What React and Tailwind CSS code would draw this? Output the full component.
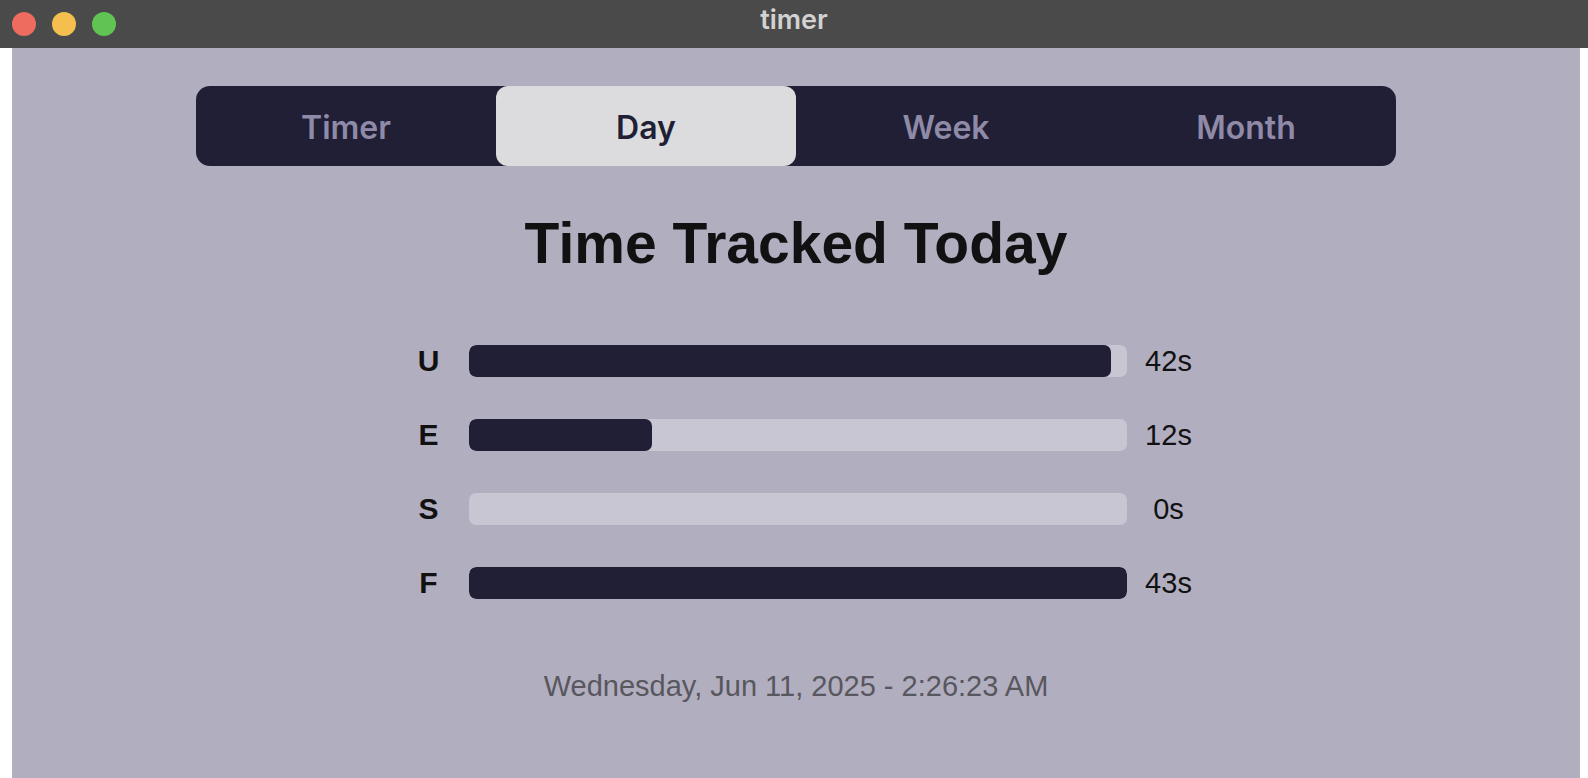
import { useMemo } from "react";

const TABS = ["Timer", "Day", "Week", "Month"];

const ENTRIES = [
  { label: "U", seconds: 42 },
  { label: "E", seconds: 12 },
  { label: "S", seconds: 0 },
  { label: "F", seconds: 43 },
];

function TitleBar() {
  return (
    <div className="relative flex h-12 items-center bg-[#4a4a4a]">
      <div className="flex gap-4 pl-3">
        <span className="h-6 w-6 rounded-full bg-[#ee6b60]" />
        <span className="h-6 w-6 rounded-full bg-[#f5bf4f]" />
        <span className="h-6 w-6 rounded-full bg-[#5fc454]" />
      </div>
      <div className="absolute inset-x-0 top-0 flex h-10 items-center justify-center font-['Inter',sans-serif] text-[27px] font-semibold text-[#d2d2d2]">
        timer
      </div>
    </div>
  );
}

function Tabs({ active }) {
  return (
    <div className="mx-auto mt-[38px] grid h-[80px] w-[1200px] grid-cols-4 rounded-[14px] bg-[#201f35] font-['Inter',sans-serif]">
      {TABS.map((tab) => (
        <button
          key={tab}
          className={
            tab === active
              ? "flex items-center justify-center rounded-[12px] bg-[#dcdcde] pt-[3px] text-[32px] font-semibold text-[#201f35]"
              : "flex items-center justify-center pt-[3px] text-[32px] font-semibold text-[#8f8aa8]"
          }
        >
          {tab}
        </button>
      ))}
    </div>
  );
}

function UsageRow({ label, seconds, max }) {
  const pct = max > 0 ? (seconds / max) * 100 : 0;

  return (
    <div className="flex h-8 items-center">
      <div className="w-10 shrink-0 text-center text-[30px] font-bold leading-8 text-[#111]">{label}</div>
      <div className="ml-5 h-8 w-[658px] shrink-0 overflow-hidden rounded-[7px] bg-[#c8c6d2]">
        <div className="h-full rounded-[7px] bg-[#201f35]" style={{ width: `${pct}%` }} />
      </div>
      <div className="ml-[12px] w-[60px] shrink-0 text-center text-[29px] leading-8 text-[#111]">{seconds}s</div>
    </div>
  );
}

export default function App() {
  const max = useMemo(() => Math.max(...ENTRIES.map((e) => e.seconds)), []);

  return (
    <div className="flex h-[778px] w-[1588px] flex-col overflow-hidden bg-white font-['Liberation_Sans',Arial,sans-serif]">
      <TitleBar />
      <div className="flex flex-1">
        <div className="w-3 bg-white" />
        <main className="flex flex-1 flex-col bg-[#b1aec0]">
          <Tabs active="Day" />
          <h1 className="mt-[45px] text-center text-[57px] font-bold leading-[64px] text-[#111]">
            Time Tracked Today
          </h1>
          <div className="mt-[70px] flex justify-center">
            <div className="flex w-[805px] flex-col gap-[42px] pl-[15px]">
              {ENTRIES.map((entry) => (
                <UsageRow key={entry.label} {...entry} max={max} />
              ))}
            </div>
          </div>
          <p className="mt-[71px] text-center text-[29px] leading-8 text-[#58575e]">
            Wednesday, Jun 11, 2025 - 2:26:23 AM
          </p>
        </main>
        <div className="w-2 bg-white" />
      </div>
    </div>
  );
}
